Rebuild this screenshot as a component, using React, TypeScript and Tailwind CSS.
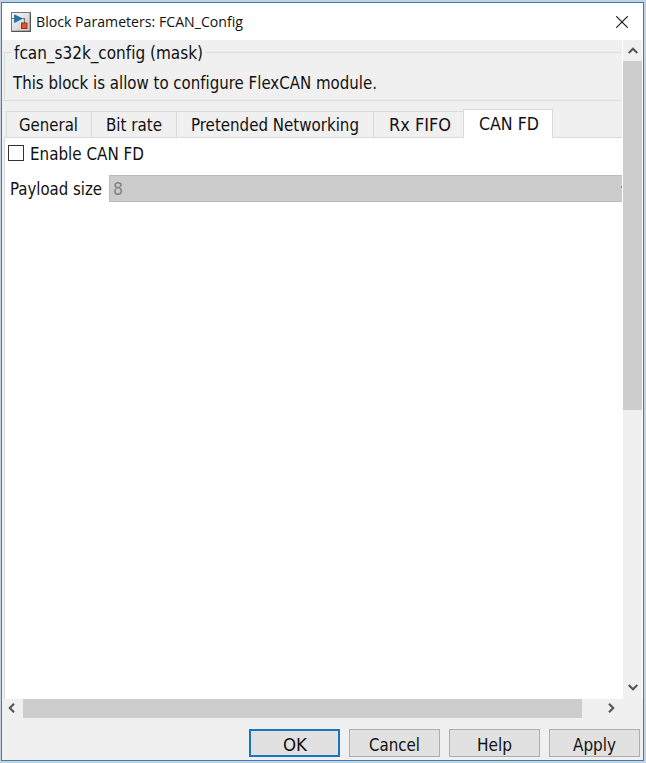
import { useLayoutEffect, useRef, useState } from "react";

/** Single line of text, condensed or widened horizontally to the given width. */
function Label({ text, width, className = "" }: { text: string; width: number; className?: string }) {
  const ref = useRef<HTMLSpanElement>(null);
  const [scale, setScale] = useState(1);
  useLayoutEffect(() => {
    const natural = ref.current?.getBoundingClientRect().width;
    if (natural) setScale(width / natural);
  }, []);
  return (
    <span className="block h-6 shrink-0" style={{ width }}>
      <span
        ref={ref}
        className={"inline-block origin-left whitespace-pre leading-6 [font-variant-ligatures:none] " + className}
        style={{ transform: `scaleX(${scale})` }}
      >
        {text}
      </span>
    </span>
  );
}

function Chevron({ d, className = "" }: { d: string; className?: string }) {
  return (
    <svg viewBox="0 0 10 10" className={"h-[10px] w-[10px] shrink-0 " + className} fill="none" stroke="#555" strokeWidth="2.1">
      <path d={d} />
    </svg>
  );
}

function BlockIcon() {
  return (
    <svg viewBox="0 0 20 20" className="h-5 w-5 shrink-0">
      <defs>
        <linearGradient id="face" x1="0" y1="0" x2="1" y2="1">
          <stop offset="0" stopColor="#fafafa" />
          <stop offset="1" stopColor="#c5c5c8" />
        </linearGradient>
      </defs>
      <rect x="0.5" y="0.5" width="19" height="19" fill="url(#face)" stroke="#777478" />
      <path d="M1 19.3H19.3V1" fill="none" stroke="#555055" strokeWidth="1.2" />
      <path d="M1 6.5H4M10 6.5H13.5V11" fill="none" stroke="#657b87" strokeWidth="1.2" />
      <path d="M3.5 2.8L11 6.6L3.5 10.6Z" fill="#2476ae" stroke="#185a8b" strokeWidth="0.7" />
      <rect x="10.5" y="11" width="5.5" height="5.5" fill="#dc562b" stroke="#9f3218" />
    </svg>
  );
}

function Tab({ text, width, className }: { text: string; width: number; className: string }) {
  return (
    <div className={"h-[27px] shrink-0 border-t border-r border-b border-[#d9d9d9] " + className}>
      <Label text={text} width={width} />
    </div>
  );
}

function DialogButton({ text, width, primary = false }: { text: string; width: number; primary?: boolean }) {
  return (
    <button
      className={
        "flex h-7 w-[91px] shrink-0 items-center justify-center bg-[#e1e1e1] pt-[2px] " +
        (primary ? "border-2 border-[#1a75bd]" : "border border-[#adadad]")
      }
    >
      <Label text={text} width={width} />
    </button>
  );
}

export default function App() {
  return (
    <div className="h-[763px] w-[646px] overflow-hidden bg-[#c3d3e2] pt-[2px] pl-px font-['DejaVu_Sans_Condensed','DejaVu_Sans',sans-serif] text-[17.5px] text-[#111]">
      <div className="flex h-[759px] w-[643px] flex-col border border-[#3580b5] bg-[#f0f0f0]">
        <header className="flex h-[37px] shrink-0 items-center bg-white pl-[9px]">
          <BlockIcon />
          <div className="ml-[5px] font-['Open_Sans',sans-serif] text-[15px]">
            <Label text="Block Parameters: FCAN_Config" width={207} className="relative -top-px" />
          </div>
          <svg viewBox="0 0 12 12" className="mr-[15px] ml-auto h-3 w-3" fill="none" stroke="#111" strokeWidth="1.1">
            <path d="M0.3 0.3L11.7 11.7M11.7 0.3L0.3 11.7" />
          </svg>
        </header>

        <div className="flex h-[659px] shrink-0">
          <main className="flex w-[620px] flex-col border-l-2 border-[#f0f0f0] bg-[#f0f0f0]">
            <fieldset className="h-[61px] shrink-0 border-b border-[#dcdcdc]">
              <div className="flex h-[25px] items-center">
                <span className="h-px w-[8px] bg-[#dcdcdc]" />
                <div className="mb-[2px] ml-[2px]">
                  <Label text="fcan_s32k_config (mask)" width={189} />
                </div>
                <span className="ml-[2px] h-px flex-1 bg-[#dcdcdc]" />
              </div>
              <div className="-mt-[12px] h-[47px] border-l border-[#dcdcdc] pt-[17px] pl-[8px]">
                <Label text="This block is allow to configure FlexCAN module." width={364} />
              </div>
            </fieldset>

            <nav className="mt-[8px] flex h-[29px] shrink-0 items-end">
              <div className="h-7 w-[2px] shrink-0 border-b border-[#d9d9d9]" />
              <Tab text="General" width={59} className="w-[86px] border-l pl-[12px]" />
              <Tab text="Bit rate" width={56} className="w-[85px] pl-[14px]" />
              <Tab text="Pretended Networking" width={168} className="w-[197px] pl-[14px]" />
              <Tab text="Rx FIFO" width={62} className="w-[89px] border-r-0 pl-[15px]" />
              <div className="h-[29px] w-[90px] shrink-0 border-x border-t border-[#d9d9d9] bg-white pt-px pl-[15px]">
                <Label text="CAN FD" width={60} />
              </div>
              <div className="h-7 flex-1 border-b border-[#d9d9d9]" />
            </nav>

            <section className="flex-1 border-l border-[#d9d9d9] bg-white">
              <label className="flex h-[30px] items-center pl-[3px]">
                <span className="h-4 w-4 shrink-0 border border-[#333] bg-white" />
                <span className="ml-[6px]">
                  <Label text="Enable CAN FD" width={114} />
                </span>
              </label>
              <div className="mt-[7px] flex h-[27px] items-center pl-[5px]">
                <div className="mb-px">
                  <Label text="Payload size" width={92} />
                </div>
                <div className="ml-[7px] flex h-[27px] flex-1 items-center border-y border-l border-[#bcbcbc] bg-[#ccc] pl-[3px] text-[#838383]">
                  <div className="mb-px">
                    <Label text="8" width={10} />
                  </div>
                  <span className="mt-[-4px] ml-auto h-[2px] w-px bg-[#858585]" />
                </div>
              </div>
            </section>
          </main>

          <aside className="flex w-5 shrink-0 flex-col items-center border-l border-white bg-[#f0f0f0]">
            <div className="flex h-[21px] shrink-0 items-center justify-center">
              <Chevron d="M0.7 7L5 2.8L9.3 7" />
            </div>
            <div className="h-[349px] w-full bg-[#cdcdcd]" />
            <Chevron d="M0.7 3L5 7.2L9.3 3" className="mt-auto mb-[7px]" />
          </aside>
          <div className="w-px bg-white" />
        </div>

        <div className="flex h-[19px] shrink-0 items-center">
          <Chevron d="M7 0.7L2.8 5L7 9.3" className="mb-px ml-[5px]" />
          <div className="ml-[6px] h-[19px] w-[559px] bg-[#cdcdcd]" />
          <Chevron d="M3 0.7L7.2 5L3 9.3" className="mb-px ml-[24px]" />
        </div>

        <footer className="mt-[11px] flex gap-[9px] pl-[247px]">
          <DialogButton text="OK" width={24} primary />
          <DialogButton text="Cancel" width={51} />
          <DialogButton text="Help" width={35} />
          <DialogButton text="Apply" width={43} />
        </footer>
      </div>
    </div>
  );
}
